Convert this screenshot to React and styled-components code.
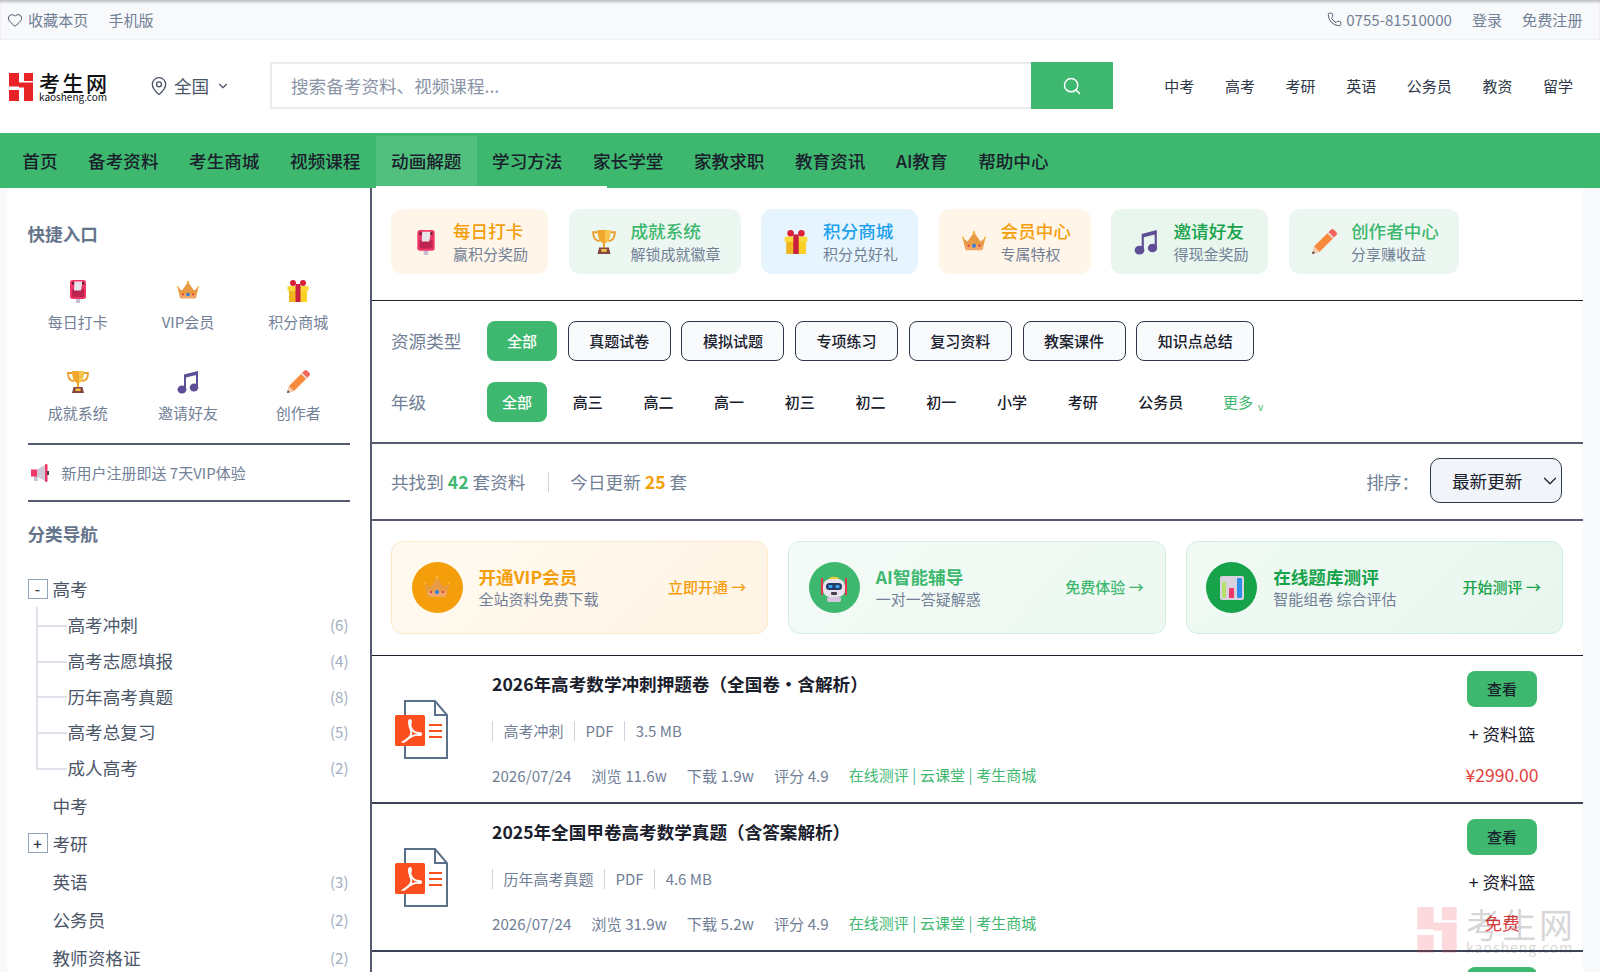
import React from 'react';
import styled, { createGlobalStyle } from 'styled-components';
import { Heart, Phone, MapPin, ChevronDown, Search } from 'lucide-react';

const FONT = `"Noto Sans CJK SC", "Noto Sans", sans-serif`;
const GREEN = '#3eb86f';

const Global = createGlobalStyle`
  html, body { margin: 0; padding: 0; height: 972px; overflow: hidden; background: #f8f9fb; }
  body { font-family: ${FONT}; color: #1a202c; }
  * { box-sizing: border-box; }
`;

const Page = styled.div`
  position: relative;
  width: 1600px;
  height: 972px;
  overflow: hidden;
`;

const TopBar = styled.div`
  height: 40px;
  padding: 0 17.5px 0 7px;
  display: flex;
  align-items: center;
  justify-content: space-between;
  background: #f8f9fb;
  border-bottom: 1px solid #f0f2f5;
  box-shadow: inset 0 3px 3px -1px #b9bcc2;
  font-size: 15.1px;
  color: #718096;
`;
const TopGroup = styled.div`
  display: flex;
  align-items: center;
  gap: 20px;
`;
const TopItem = styled.span`
  display: inline-flex;
  align-items: center;
  gap: 5px;
  line-height: 1;
  & > svg { color: #4a5568; }
`;

const Header = styled.header`
  height: 93px;
  background: #fff;
  display: flex;
  align-items: center;
  padding: 0 27px 2px 9px;
`;
const Logo = styled.div`
  width: 100px;
  height: 28px;
  margin-top: 3px;
  display: flex;
  gap: 6px;
  flex: none;
`;
const LogoText = styled.div`
  display: flex;
  flex-direction: column;
  width: 69px;
`;
const LogoCn = styled.span`
  font-size: 21px;
  line-height: 19px;
  font-weight: 500;
  letter-spacing: 2.5px;
  color: #111;
  white-space: nowrap;
`;
const LogoEn = styled.span`
  font-size: 10px;
  line-height: 9px;
  color: #111;
  white-space: nowrap;
`;
const Location = styled.div`
  margin-left: 40px;
  width: 121px;
  display: flex;
  align-items: center;
  font-size: 17.6px;
  color: #4a5568;
  flex: none;
`;
const LocText = styled.span`
  margin: 0 7px 0 5px;
`;
const SearchBox = styled.div`
  width: 843px;
  height: 47px;
  display: flex;
  border: 2px solid #e8ebf0;
  flex: none;
`;
const SearchInput = styled.div`
  flex: 1;
  display: flex;
  align-items: center;
  padding-left: 19px;
  font-size: 17.6px;
  color: #8a94a6;
`;
const SearchBtn = styled.div`
  width: 82px;
  margin: -2px -2px -2px 0;
  background: ${GREEN};
  display: flex;
  align-items: center;
  justify-content: center;
  color: #fff;
`;
const HeaderLinks = styled.nav`
  margin-left: auto;
  display: flex;
  gap: 30.6px;
  font-size: 15px;
  color: #2d3748;
`;

const NavBar = styled.nav`
  position: relative;
  height: 55px;
  background: ${GREEN};
  display: flex;
  padding: 3px 0 0 7px;
  font-size: 17.6px;
  font-weight: 500;
  color: #1a202c;
  &::after {
    content: '';
    position: absolute;
    left: 376px;
    bottom: 0;
    width: 231px;
    height: 2px;
    background: #fff;
  }
`;
const NavItem = styled.a`
  height: 50px;
  padding: 0 15.3px 2px;
  display: flex;
  align-items: center;
  background: ${p => (p.$active ? 'rgba(255,255,255,.1)' : 'transparent')};
`;

const Body = styled.div`
  display: flex;
  height: 784px;
`;
const Side = styled.aside`
  margin-left: 7px;
  width: 363px;
  flex: none;
  background: #fff;
  padding: 32px 20px 0 20.5px;
`;
const SideTitle = styled.h3`
  margin: 0;
  font-size: 17.6px;
  line-height: 28px;
  font-weight: 600;
  color: #64748b;
`;
const QuickGrid = styled.div`
  display: grid;
  grid-template-columns: repeat(3, 1fr);
  margin: 31px 0 0 -5px;
  width: 331px;
  row-gap: 37px;
`;
const QuickItem = styled.div`
  display: flex;
  flex-direction: column;
  align-items: center;
  gap: 8px;
  font-size: 15px;
  line-height: 22px;
  color: #718096;
`;
const HLine = styled.div`
  height: 2px;
  background: #555b6e;
  width: 322px;
`;
const Notice = styled.div`
  height: 55px;
  display: flex;
  align-items: center;
  gap: 13px;
  padding-left: 3px;
  font-size: 15px;
  color: #718096;
`;
const Tree = styled.div`
  margin-top: 22px;
  width: 322px;
  font-size: 17.6px;
  color: #4a5568;
`;
const TreeRow = styled.div`
  display: flex;
  align-items: center;
  height: ${p => p.$h || 38}px;
  padding-left: ${p => (p.$child ? 40 : 25)}px;
  position: relative;
`;
const Toggle = styled.span`
  position: absolute;
  left: 0;
  top: 50%;
  transform: translateY(-50%);
  width: 20px;
  height: 20px;
  border: 1.5px solid #94a3b8;
  display: flex;
  align-items: center;
  justify-content: center;
  font-size: 15px;
  font-weight: 500;
  line-height: 1;
  color: #2d3748;
`;
const TreeLabel = styled.span`
  flex: 1;
  white-space: nowrap;
`;
const Count = styled.span`
  font-size: 15px;
  color: #a0aec0;
  padding-right: 1px;
`;
const Children = styled.div`
  position: relative;
  margin-bottom: 1px;
  &::before {
    content: '';
    position: absolute;
    left: 8px;
    top: 0;
    width: 2px;
    height: 162px;
    background: #dde2e8;
  }
`;
const Branch = styled.i`
  position: absolute;
  left: 8px;
  top: 50%;
  width: 31px;
  height: 2px;
  background: #dde2e8;
`;

const Main = styled.main`
  width: 1213px;
  flex: none;
  background: #fff;
  border-left: 2px solid #555b6e;
`;
const Cards = styled.div`
  height: 113px;
  padding: 21px 19px 0;
  display: flex;
  gap: 20.5px;
  align-items: flex-start;
  border-bottom: 1px solid #1a202c;
`;
const Card = styled.div`
  height: 65px;
  padding: 0 20px;
  border-radius: 11px;
  background: ${p => p.$bg};
  display: flex;
  align-items: center;
  gap: 12px;
`;
const CardIcon = styled.div`
  width: 30px;
  display: flex;
  justify-content: center;
`;
const CardText = styled.div`
  display: flex;
  flex-direction: column;
  white-space: nowrap;
`;
const CardTitle = styled.div`
  font-size: 17.6px;
  line-height: 24px;
  font-weight: 500;
  color: ${p => p.$c};
`;
const CardSub = styled.div`
  font-size: 15px;
  line-height: 21px;
  color: #718096;
`;
const Filters = styled.div`
  height: 143px;
  padding: 20px 19px 0;
  border-bottom: 2px solid #555b6e;
`;
const FilterRow = styled.div`
  display: flex;
  align-items: center;
  height: 40px;
  margin-bottom: 21px;
  gap: 10.7px;
`;
const FilterLabel = styled.div`
  width: 96px;
  margin-right: -10.7px;
  padding-bottom: 2px;
  font-size: 17.6px;
  color: #718096;
`;
const Chip = styled.div`
  height: 40px;
  padding: 0 ${p => (p.$boxed ? 20.5 : 15)}px 2px;
  min-width: ${p => (p.$wide ? 70 : 0)}px;
  display: flex;
  align-items: center;
  justify-content: center;
  border-radius: 8px;
  font-size: 15px;
  font-weight: 500;
  white-space: nowrap;
  color: ${p => (p.$on ? '#fff' : '#1a202c')};
  background: ${p => (p.$on ? GREEN : p.$boxed ? '#f8fafc' : 'transparent')};
  border: ${p => (p.$boxed ? '1.5px solid #2d3748' : 'none')};
`;
const More = styled.div`
  display: flex;
  align-items: baseline;
  padding: 0 0 2px 14px;
  font-size: 15px;
  color: ${GREEN};
  gap: 5px;
`;
const MoreV = styled.span`
  font-size: 10px;
  position: relative;
  top: 3px;
`;
const Stats = styled.div`
  height: 77px;
  padding: 0 21px 0 19px;
  display: flex;
  align-items: center;
  font-size: 17.6px;
  color: #718096;
  border-bottom: 2px solid #555b6e;
`;
const Num = styled.b`
  color: ${p => p.$c};
  font-weight: 600;
  margin: 0 4px;
`;
const StatSep = styled.i`
  width: 1px;
  height: 20px;
  background: #cbd5e0;
  margin: 0 21px 0 23px;
`;
const SortLabel = styled.span`
  margin-left: auto;
  margin-right: 11px;
`;
const Select = styled.div`
  width: 132px;
  height: 45px;
  margin-top: -2px;
  border: 1.5px solid #2d3748;
  border-radius: 10px;
  background: #f1f5f9;
  display: flex;
  align-items: center;
  justify-content: space-between;
  padding: 0 0 0 21px;
  color: #1a202c;
`;
const Promos = styled.div`
  height: 135px;
  padding: 20px 20px 0 19px;
  display: flex;
  gap: 20px;
  border-bottom: 1px solid #1a202c;
  align-items: flex-start;
`;
const Promo = styled.div`
  flex: 1;
  height: 93px;
  border: 1.5px solid ${p => p.$bd};
  border-radius: 12px;
  background: ${p => p.$bg};
  display: flex;
  align-items: center;
  padding: 0 21px 0 19.5px;
`;
const PromoCircle = styled.div`
  width: 51px;
  height: 51px;
  border-radius: 50%;
  background: ${p => p.$c};
  display: flex;
  align-items: center;
  justify-content: center;
  flex: none;
  margin-right: 16px;
`;
const PromoText = styled.div`
  flex: 1;
`;
const PromoTitle = styled.div`
  font-size: 17.6px;
  line-height: 23px;
  font-weight: 600;
  color: ${p => p.$c};
`;
const PromoSub = styled.div`
  font-size: 15px;
  line-height: 22px;
  color: #718096;
`;
const PromoCta = styled.div`
  font-size: 15px;
  font-weight: 500;
  padding-bottom: 2px;
  color: ${p => p.$c};
  white-space: nowrap;
`;
const Item = styled.article`
  height: 148px;
  padding: 12px 26px 0 19px;
  display: grid;
  grid-template-columns: 101px 1fr 110px;
  border-bottom: 2px solid #3d4356;
`;
const FileCol = styled.div`
  padding-top: 30px;
`;
const ItemBody = styled.div`
  display: flex;
  flex-direction: column;
`;
const ItemTitle = styled.h4`
  margin: 0;
  font-size: 17.6px;
  line-height: 32px;
  font-weight: 600;
  color: #1a202c;
`;
const Meta = styled.div`
  display: flex;
  align-items: center;
  margin-top: 21px;
  height: 20px;
  font-size: 15px;
  color: #718096;
`;
const MetaItem = styled.span`
  border-left: 1px solid #cbd5e0;
  padding: 0 10.5px;
  line-height: 20px;
`;
const InfoRow = styled.div`
  display: flex;
  gap: 20px;
  margin-top: 22px;
  font-size: 15.2px;
  line-height: 24px;
  color: #718096;
`;
const Links = styled.span`
  font-size: 15px;
  color: ${GREEN};
`;
const Bar = styled.span`
  color: #4db8a0;
  margin: 0 3.6px;
`;
const ActionCol = styled.div`
  display: flex;
  flex-direction: column;
  align-items: center;
  padding-top: 3px;
`;
const ViewBtn = styled.div`
  width: 70px;
  height: 36px;
  padding-bottom: 2px;
  border-radius: 8px;
  background: ${GREEN};
  display: flex;
  align-items: center;
  justify-content: center;
  font-size: 15px;
  font-weight: 500;
  color: #1a202c;
`;
const Basket = styled.div`
  margin-top: 13px;
  font-size: 17.6px;
  line-height: 28px;
  color: #1a202c;
`;
const Price = styled.div`
  margin-top: 13px;
  font-size: 17.6px;
  line-height: 28px;
  color: #e53e3e;
  white-space: nowrap;
`;
const Watermark = styled.div`
  position: absolute;
  left: 1417px;
  top: 907px;
  width: 160px;
  height: 47px;
  display: flex;
  gap: 9px;
  opacity: .18;
  pointer-events: none;
`;
const WmText = styled.div`
  display: flex;
  flex-direction: column;
`;
const WmCn = styled.span`
  font-size: 34px;
  line-height: 33px;
  letter-spacing: 2.5px;
  color: #222;
  white-space: nowrap;
`;
const WmEn = styled.span`
  font-size: 14px;
  line-height: 14px;
  letter-spacing: 1px;
  color: #222;
  white-space: nowrap;
`;

/* ---------- drawings ---------- */
const LogoMark = ({ w = 24, h = 28, c = '#e82327' }) => (
  <svg width={w} height={h} viewBox="0 0 24 28" style={{ flex: 'none' }}>
    <path fill={c} d="M0 0h10v13.500H0zM15 0h9v8h-9zM10 9.500h14v5H10zM0 17h10v11H0zM15 14h9v14h-9z" />
  </svg>
);
const Postbox = ({ s = 24 }) => (
  <svg width={s} height={s} viewBox="0 0 24 24">
    <rect x="10" y="18" width="4" height="6" fill="#c8bfd4" />
    <rect x="4" y="1" width="16" height="19" rx="2.500" fill="#ee3768" />
    <rect x="6" y="10" width="12" height="8" fill="#bd2450" />
    <path d="M8.500 2.500h8l-1.500 9h-7z" fill="#e8e4ea" />
    <rect x="6" y="3" width="2" height="2.500" fill="#5a2136" />
    <rect x="16" y="3" width="2" height="2.500" fill="#5a2136" />
  </svg>
);
const Crown = ({ s = 24 }) => (
  <svg width={s} height={s} viewBox="0 0 24 24">
    <path d="M1.500 8l4.500 3.500L12 3l6 8.500L22.500 8 20 19H4z" fill="#e99a45" />
    <path d="M4 15h16l-.8 4.500H4.800z" fill="#f0a868" />
    <circle cx="12" cy="15.500" r="1.800" fill="#2d7fe0" />
    <circle cx="7" cy="15.500" r="1" fill="#e0284a" />
    <circle cx="17" cy="15.500" r="1" fill="#e0284a" />
    <circle cx="12" cy="3" r="1.200" fill="#f5b83a" />
    <circle cx="1.800" cy="8" r="1" fill="#f5b83a" />
    <circle cx="22.200" cy="8" r="1" fill="#f5b83a" />
  </svg>
);
const Gift = ({ s = 24 }) => (
  <svg width={s} height={s} viewBox="0 0 24 24">
    <rect x="3" y="9" width="18" height="14" fill="#f0b41f" />
    <rect x="14" y="9" width="7" height="14" fill="#fbd024" />
    <rect x="1.500" y="7" width="21" height="5" rx="1" fill="#fbd83a" />
    <rect x="9.500" y="5" width="5" height="18" fill="#c9203f" />
    <circle cx="7" cy="4" r="3" fill="#d71f3a" />
    <circle cx="17" cy="4" r="3" fill="#d71f3a" />
  </svg>
);
const Trophy = ({ s = 24 }) => (
  <svg width={s} height={s} viewBox="0 0 24 24">
    <path d="M6 3H2c0 5 2 8 6 8M18 3h4c0 5-2 8-6 8" fill="none" stroke="#eb9d2e" strokeWidth="1.800" />
    <path d="M6 1h12c0 7-2 11-5 12v4h-2v-4C8 12 6 8 6 1z" fill="#f2a72f" />
    <path d="M13 1h5c0 7-2 11-5 12z" fill="#f7c54d" />
    <path d="M6 23l1.500-6h9L18 23z" fill="#84473f" />
    <rect x="9.500" y="18.500" width="5" height="2.500" fill="#f4c34c" />
  </svg>
);
const Music = ({ s = 24 }) => (
  <svg width={s} height={s} viewBox="0 0 24 24">
    <path d="M8 4.500L22 1v3.500L10 7.500V19H8zM20 4h2v14h-2z" fill="#5e4e96" />
    <ellipse cx="6" cy="19.500" rx="4.500" ry="4" fill="#5e4e96" />
    <ellipse cx="18" cy="17.500" rx="4.300" ry="4" fill="#5e4e96" />
  </svg>
);
const Pencil = ({ s = 24 }) => (
  <svg width={s} height={s} viewBox="0 0 24 24">
    <path d="M1 23l2-7L16 3l5 5L8 21z" fill="#f7893b" />
    <path d="M16 3l2.500-2.500a2 2 0 0 1 2.500 0l2.500 2.500a2 2 0 0 1 0 2.500L21 8z" fill="#f4655a" />
    <path d="M15 4l5 5 1.200-1.200-5-5z" fill="#e8d8dc" />
    <path d="M1 23l2-7 5 5z" fill="#f3cfb0" />
    <path d="M1 23l.8-2.800 2 2z" fill="#503c4a" />
  </svg>
);
const Megaphone = () => (
  <svg width="18" height="18" viewBox="0 0 18 18">
    <rect x="3" y="11" width="3.500" height="6" fill="#c6bdd0" />
    <rect x="0" y="5.500" width="6" height="7" fill="#ee3768" />
    <path d="M6 5.500L14 1v16l-8-4.500z" fill="#cfc8d6" />
    <rect x="14" y="0" width="2.500" height="18" rx="1" fill="#ee3768" />
    <rect x="16" y="7" width="2" height="4" fill="#4a3d52" />
  </svg>
);
const Robot = () => (
  <svg width="26" height="30" viewBox="0 0 26 30">
    <rect x="0" y="5" width="2" height="17" fill="#e8344e" />
    <rect x="24" y="5" width="2" height="17" fill="#e8344e" />
    <path d="M8 6c0-3 10-3 10 0z" fill="#f4cf34" />
    <rect x="2" y="6" width="22" height="18" rx="7" fill="#eae3ee" />
    <rect x="5" y="10" width="16" height="7" rx="3.500" fill="#233a63" />
    <rect x="7.500" y="12" width="4" height="3" rx="1" fill="#3ba4f0" />
    <rect x="14.500" y="12" width="4" height="3" rx="1" fill="#3ba4f0" />
    <rect x="10" y="19" width="6" height="3" rx="1" fill="#4a3d52" />
    <rect x="6" y="24" width="14" height="5" rx="2" fill="#d8c4de" />
  </svg>
);
const ChartIcon = () => (
  <svg width="24" height="24" viewBox="0 0 24 24">
    <rect x="0" y="0" width="24" height="24" rx="2" fill="#d7d2de" />
    <rect x="2" y="6" width="4" height="16" rx="1" fill="#b5e06a" />
    <rect x="9" y="12" width="5" height="10" rx="1" fill="#ee3768" />
    <rect x="17" y="2" width="5" height="20" rx="1" fill="#2f8fea" />
  </svg>
);
const PdfIcon = () => (
  <svg width="60" height="62" viewBox="0 0 60 62" style={{ display: 'block' }}>
    <path d="M14 3h30l12 14v43H14z" fill="#fff" stroke="#5b7089" strokeWidth="2" />
    <path d="M44 3v14h12" fill="none" stroke="#5b7089" strokeWidth="2" />
    <rect x="4" y="17" width="30" height="31" rx="1.500" fill="#fb4f1f" />
    <path d="M19 22c-2 0-1 6 1 11s-6 10-8 11c3 1 6-8 16-7 3 .5 3-2 0-2-6 0-10-6-8-11 0-2-1-2-1-2z" fill="none" stroke="#fff" strokeWidth="1.800" />
    <path d="M38 27h13M38 33h13M38 39h13" stroke="#fb4f1f" strokeWidth="2.200" />
  </svg>
);

const QUICK = [
  [Postbox, '每日打卡'], [Crown, 'VIP会员'], [Gift, '积分商城'],
  [Trophy, '成就系统'], [Music, '邀请好友'], [Pencil, '创作者'],
];
const CARDS = [
  [Postbox, '每日打卡', '赢积分奖励', '#f59e0b', '#fff6e9'],
  [Trophy, '成就系统', '解锁成就徽章', GREEN, '#edf7f2'],
  [Gift, '积分商城', '积分兑好礼', '#1da1ee', '#e6f5fd'],
  [Crown, '会员中心', '专属特权', '#f59e0b', '#fff6e9'],
  [Music, '邀请好友', '得现金奖励', '#16a34a', '#e8f6ee'],
  [Pencil, '创作者中心', '分享赚收益', GREEN, '#edf7f2'],
];
const TYPES = ['真题试卷', '模拟试题', '专项练习', '复习资料', '教案课件', '知识点总结'];
const GRADES = ['高三', '高二', '高一', '初三', '初二', '初一', '小学', '考研', '公务员'];
const PROMOS = [
  { icon: <Crown s={28} />, c: '#f59e0b', t: '开通VIP会员', s: '全站资料免费下载', a: '立即开通 →', bd: '#fde8c8', bg: 'linear-gradient(135deg,#fffaf1,#fff4e4)' },
  { icon: <Robot />, c: GREEN, t: 'AI智能辅导', s: '一对一答疑解惑', a: '免费体验 →', bd: '#d3efdf', bg: 'linear-gradient(135deg,#f5fbf8,#ecf8f1)' },
  { icon: <ChartIcon />, c: '#16a34a', t: '在线题库测评', s: '智能组卷 综合评估', a: '开始测评 →', bd: '#cdeedb', bg: 'linear-gradient(135deg,#f1faf5,#e8f6ee)' },
];
const ITEMS = [
  { t: '2026年高考数学冲刺押题卷（全国卷・含解析）', m: ['高考冲刺', 'PDF', '3.5 MB'], v: '11.6w', d: '1.9w', p: '¥2990.00' },
  { t: '2025年全国甲卷高考数学真题（含答案解析）', m: ['历年高考真题', 'PDF', '4.6 MB'], v: '31.9w', d: '5.2w', p: '免费' },
  { t: '2025年高考语文作文素材精选与范文解析（精华版）', m: ['高考总复习', 'PDF', '2.8 MB'], v: '9.3w', d: '1.2w', p: '免费' },
];
const SUBS = [['高考冲刺', 6], ['高考志愿填报', 4], ['历年高考真题', 8], ['高考总复习', 5], ['成人高考', 2]];

export default function App() {
  return (
    <Page>
      <Global />
      <TopBar>
        <TopGroup>
          <TopItem><Heart size={16} strokeWidth={1.5} />收藏本页</TopItem>
          <TopItem>手机版</TopItem>
        </TopGroup>
        <TopGroup>
          <TopItem><Phone size={15} strokeWidth={1.5} style={{ marginRight: -1 }} />0755-81510000</TopItem>
          <TopItem>登录</TopItem>
          <TopItem>免费注册</TopItem>
        </TopGroup>
      </TopBar>
      <Header>
        <Logo>
          <LogoMark />
          <LogoText>
            <LogoCn>考生网</LogoCn>
            <LogoEn>kaosheng.com</LogoEn>
          </LogoText>
        </Logo>
        <Location>
          <MapPin size={20} strokeWidth={1.6} />
          <LocText>全国</LocText>
          <ChevronDown size={14} strokeWidth={2} />
        </Location>
        <SearchBox>
          <SearchInput>搜索备考资料、视频课程...</SearchInput>
          <SearchBtn><Search size={20} strokeWidth={1.8} /></SearchBtn>
        </SearchBox>
        <HeaderLinks>
          {['中考', '高考', '考研', '英语', '公务员', '教资', '留学'].map(x => <span key={x}>{x}</span>)}
        </HeaderLinks>
      </Header>
      <NavBar>
        {['首页', '备考资料', '考生商城', '视频课程', '动画解题', '学习方法', '家长学堂', '家教求职', '教育资讯', 'AI教育', '帮助中心'].map(x => (
          <NavItem key={x} $active={x === '动画解题'}>{x}</NavItem>
        ))}
      </NavBar>
      <Body>
        <Side>
          <SideTitle>快捷入口</SideTitle>
          <QuickGrid>
            {QUICK.map(([I, l]) => (
              <QuickItem key={l}><I />{l}</QuickItem>
            ))}
          </QuickGrid>
          <HLine style={{ marginTop: 19 }} />
          <Notice><Megaphone />新用户注册即送 7天VIP体验</Notice>
          <HLine />
          <SideTitle style={{ marginTop: 18 }}>分类导航</SideTitle>
          <Tree>
            <TreeRow $h={37}><Toggle>-</Toggle><TreeLabel>高考</TreeLabel></TreeRow>
            <Children>
              {SUBS.map(([l, n]) => (
                <TreeRow key={l} $child $h={35.7}><Branch /><TreeLabel>{l}</TreeLabel><Count>({n})</Count></TreeRow>
              ))}
            </Children>
            <TreeRow><TreeLabel>中考</TreeLabel></TreeRow>
            <TreeRow><Toggle>+</Toggle><TreeLabel>考研</TreeLabel></TreeRow>
            <TreeRow><TreeLabel>英语</TreeLabel><Count>(3)</Count></TreeRow>
            <TreeRow><TreeLabel>公务员</TreeLabel><Count>(2)</Count></TreeRow>
            <TreeRow><TreeLabel>教师资格证</TreeLabel><Count>(2)</Count></TreeRow>
          </Tree>
        </Side>
        <Main>
          <Cards>
            {CARDS.map(([I, t, s, c, bg]) => (
              <Card key={t} $bg={bg}>
                <CardIcon><I s={26} /></CardIcon>
                <CardText>
                  <CardTitle $c={c}>{t}</CardTitle>
                  <CardSub>{s}</CardSub>
                </CardText>
              </Card>
            ))}
          </Cards>
          <Filters>
            <FilterRow>
              <FilterLabel>资源类型</FilterLabel>
              <Chip $on $wide>全部</Chip>
              {TYPES.map(x => <Chip key={x} $boxed>{x}</Chip>)}
            </FilterRow>
            <FilterRow>
              <FilterLabel>年级</FilterLabel>
              <Chip $on>全部</Chip>
              {GRADES.map(x => <Chip key={x}>{x}</Chip>)}
              <More>更多<MoreV>v</MoreV></More>
            </FilterRow>
          </Filters>
          <Stats>
            共找到<Num $c={GREEN}>42</Num>套资料
            <StatSep />
            今日更新<Num $c="#f59e0b">25</Num>套
            <SortLabel>排序：</SortLabel>
            <Select>最新更新<ChevronDown size={22} strokeWidth={1.3} /></Select>
          </Stats>
          <Promos>
            {PROMOS.map(p => (
              <Promo key={p.t} $bd={p.bd} $bg={p.bg}>
                <PromoCircle $c={p.c}>{p.icon}</PromoCircle>
                <PromoText>
                  <PromoTitle $c={p.c}>{p.t}</PromoTitle>
                  <PromoSub>{p.s}</PromoSub>
                </PromoText>
                <PromoCta $c={p.c}>{p.a}</PromoCta>
              </Promo>
            ))}
          </Promos>
          {ITEMS.map(it => (
            <Item key={it.t}>
              <FileCol><PdfIcon /></FileCol>
              <ItemBody>
                <ItemTitle>{it.t}</ItemTitle>
                <Meta>{it.m.map(x => <MetaItem key={x}>{x}</MetaItem>)}</Meta>
                <InfoRow>
                  <span>2026/07/24</span>
                  <span>浏览 {it.v}</span>
                  <span>下载 {it.d}</span>
                  <span>评分 4.9</span>
                  <Links>在线测评<Bar>|</Bar>云课堂<Bar>|</Bar>考生商城</Links>
                </InfoRow>
              </ItemBody>
              <ActionCol>
                <ViewBtn>查看</ViewBtn>
                <Basket>+ 资料篮</Basket>
                <Price>{it.p}</Price>
              </ActionCol>
            </Item>
          ))}
        </Main>
      </Body>
      <Watermark>
        <LogoMark w={40} h={46} c="#f0354a" />
        <WmText>
          <WmCn>考生网</WmCn>
          <WmEn>kaosheng.com</WmEn>
        </WmText>
      </Watermark>
    </Page>
  );
}
